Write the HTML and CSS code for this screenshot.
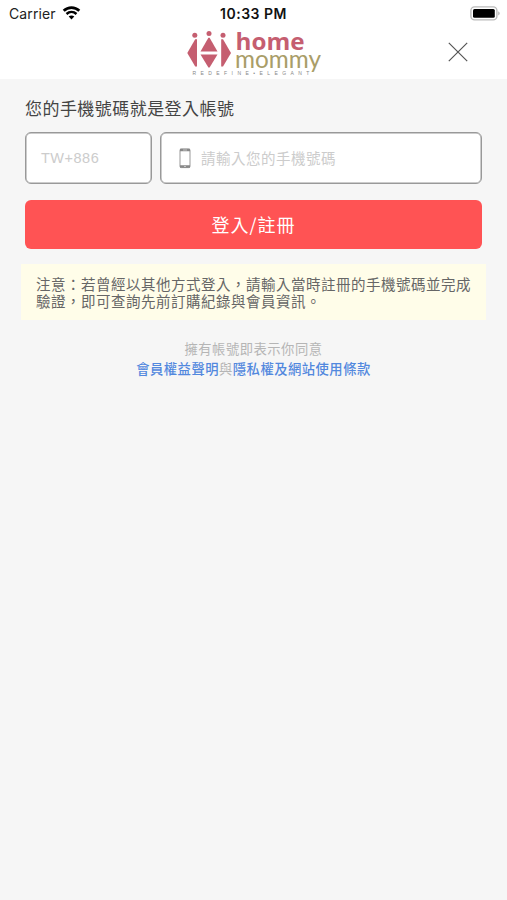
FILE: index.html
```html
<!DOCTYPE html>
<html lang="zh-Hant">
<head>
  <meta charset="UTF-8">
  <meta name="viewport" content="width=device-width, initial-scale=1.0">
  <title>home mommy</title>
  <link rel="stylesheet" href="styles.css">
</head>
<body>
  <div class="header">
    <div class="status-bar">
      <div class="carrier">
        <span>Carrier</span>
        <svg width="19" height="14" viewBox="0 0 18 14">
          <path d="M1.2 4.8C5.6 .5 12.4 .5 16.8 4.8" fill="none" stroke="#000" stroke-width="2.7"/>
          <path d="M4 8C6.9 5.3 11.1 5.3 14 8" fill="none" stroke="#000" stroke-width="2.4"/>
          <path d="M6.2 10.5C7.8 9.1 10.2 9.1 11.8 10.5L9 13.5Z" fill="#000"/>
        </svg>
      </div>
      <div class="time">10:33 PM</div>
      <div class="battery">
        <svg width="31" height="15" viewBox="0 0 31 15">
          <rect x=".9" y=".9" width="26" height="13" rx="3.6" fill="#fff" stroke="#bbb" stroke-width="1.4"/>
          <rect x="3" y="3" width="21.8" height="8.8" rx="1.5" fill="#000"/>
          <path d="M28.3 5.2Q31 7.4 28.3 9.6Z" fill="#aaa"/>
        </svg>
      </div>
    </div>
    <div class="nav-bar">
      <svg class="logo" width="136" height="50" viewBox="186 27 136 50">
        <g fill="#c55e70">
          <circle cx="194.8" cy="35.2" r="2.5"/>
          <circle cx="209" cy="33.4" r="2.5"/>
          <circle cx="223" cy="35.2" r="2.5"/>
          <path d="M187.3 53L195.2 39.2H197V66.5H195.2Z"/>
          <path d="M231 53L223 39.2H221.2V66.5H223Z"/>
          <path d="M208.4 37.8H209.6L217.5 51.6H200.5Z"/>
          <path d="M200.5 54.6H217.5L209.6 67.5H208.4Z"/>
        </g>
        <text class="logo-home" x="235.5" y="50" textLength="69" lengthAdjust="spacingAndGlyphs">home</text>
        <text class="logo-mommy" x="235" y="67.6" textLength="86" lengthAdjust="spacingAndGlyphs">mommy</text>
        <text class="logo-tagline" x="192.4" y="74.6" textLength="117">REDEFINE•ELEGANT</text>
      </svg>
      <svg class="close" width="20" height="20" viewBox="0 0 20 20">
        <path d="M.8 .8L19.2 19.2M19.2 .8L.8 19.2" stroke="#555" stroke-width="1.2"/>
      </svg>
    </div>
  </div>

  <div class="login">
    <div class="title">您的手機號碼就是登入帳號</div>
    <div class="inputs">
      <div class="input country">TW+886</div>
      <div class="input phone">
        <svg width="12" height="21" viewBox="0 0 12 21">
          <rect x="1" y="1" width="10" height="18.6" rx="1.3" fill="#fff" stroke="#999" stroke-width="1"/>
          <path d="M1 .8H11V3.2H1ZM1 17.2H11V19.8H1Z" fill="#888"/>
          <path d="M4 2H8M5 18.5H7" stroke="#ddd" stroke-width=".7"/>
        </svg>
        <span>請輸入您的手機號碼</span>
      </div>
    </div>
    <div class="button">登入/註冊</div>
    <div class="note">注意：若曾經以其他方式登入，請輸入當時註冊的手機號碼並完成<br>驗證，即可查詢先前訂購紀錄與會員資訊。</div>
    <div class="terms">
      擁有帳號即表示你同意<br>
      <a>會員權益聲明</a>與<a>隱私權及網站使用條款</a>
    </div>
  </div>
</body>
</html>
```
FILE: styles.css
```css
body {
  margin: 0;
  background-color: #f6f6f6;
  font-family: "Noto Sans CJK TC", sans-serif;
}

.header {
  height: 79px;
  background-color: #fff;
}

.status-bar {
  height: 27px;
  display: grid;
  grid-template-columns: 1fr auto 1fr;
  align-items: center;
  font-family: Inter, sans-serif;
  font-size: 14px;
  color: #222;
}

.carrier {
  display: flex;
  align-items: center;
  gap: 6px;
  padding-left: 9px;
  letter-spacing: 0.1px;
}

.carrier svg {
  margin-top: -2px;
}

.time {
  font-weight: 600;
  letter-spacing: 0.5px;
  color: #111;
}

.battery {
  display: flex;
  justify-content: flex-end;
  padding-right: 6px;
}

.nav-bar {
  display: grid;
  grid-template-columns: 1fr auto 1fr;
  align-items: center;
}

.logo {
  grid-column: 2;
  overflow: visible;
}

.logo-home {
  font: 700 24px "Open Sans", sans-serif;
  fill: #c55e70;
}

.logo-mommy {
  font: 400 25.5px Lato, sans-serif;
  fill: #a99d68;
}

.logo-tagline {
  font: 400 5px "Liberation Sans", sans-serif;
  fill: #888;
}

.close {
  justify-self: end;
  margin-right: 39px;
}

.login {
  padding: 17px 25px 0;
}

.title {
  font-size: 17px;
  line-height: 24px;
  letter-spacing: 0.45px;
  color: #444;
}

.inputs {
  display: flex;
  gap: 8px;
  margin-top: 12px;
}

.input {
  box-sizing: border-box;
  height: 52px;
  display: flex;
  align-items: center;
  background-color: #fff;
  border: 1px solid #999;
  border-radius: 6px;
  box-shadow: inset 0 0 0 0.5px #999;
  font-size: 14.5px;
  letter-spacing: 0.5px;
  color: #ccc;
}

.country {
  width: 127px;
  padding-left: 15px;
  font-family: "Liberation Sans", "Noto Sans CJK TC", sans-serif;
}

.phone {
  flex: 1;
  gap: 10px;
  padding-left: 18px;
}

.phone span {
  padding-bottom: 2px;
}

.button {
  height: 49px;
  margin-top: 16px;
  border-radius: 6px;
  background-color: #ff5354;
  color: #fff;
  font-size: 18px;
  line-height: 49px;
  letter-spacing: 1px;
  text-align: center;
}

.note {
  margin: 15px -4px 0;
  padding: 11px 0 11px 15px;
  background-color: #fffde9;
  color: #666;
  font-size: 14.5px;
  line-height: 17px;
  letter-spacing: 0.5px;
  white-space: nowrap;
}

.terms {
  margin-top: 19px;
  font-size: 13.3px;
  line-height: 20px;
  letter-spacing: 0.5px;
  text-align: center;
  color: #b5b5b5;
}

.terms a {
  color: #5288de;
  font-weight: 500;
}
```
